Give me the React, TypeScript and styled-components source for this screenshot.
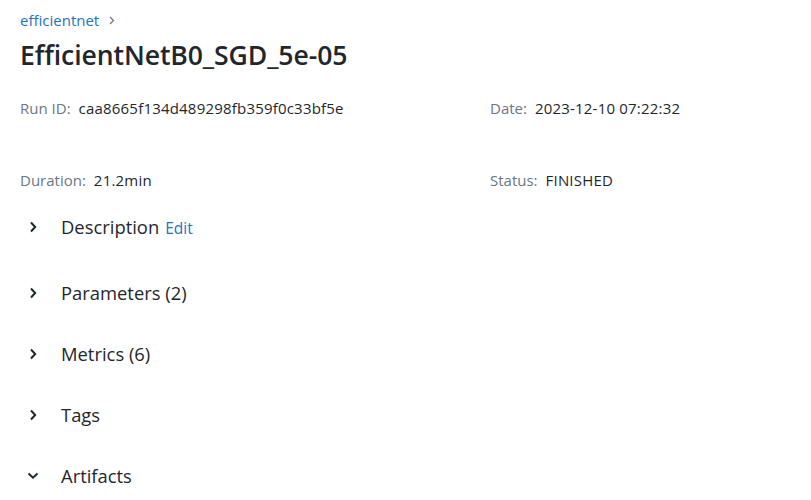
import React from "react";
import styled, { createGlobalStyle } from "styled-components";

const Global = createGlobalStyle`
  html, body { margin: 0; padding: 0; background: #fff; }
  body { font-family: "Segoe UI", "Open Sans", "Noto Sans", sans-serif; color: #1f2328; }
`;

const Page = styled.div`
  padding: 9px 20px 0 20px;
  width: 811px;
  box-sizing: border-box;
`;

const Breadcrumb = styled.div`
  display: flex;
  align-items: center;
  gap: 10px;
  height: 22px;
  font-size: 15px;
`;

const Crumb = styled.a`
  color: #2374bb;
  text-decoration: none;
`;

const CrumbSep = styled.span`
  color: #6b7785;
  display: flex;
  align-items: center;
`;

const Title = styled.h1`
  margin: 6px 0 0 0;
  font-size: 26.6px;
  line-height: 36px;
  font-weight: 600;
  color: #1f272d;
  letter-spacing: -0.1px;
`;

const Meta = styled.div`
  margin-top: 25px;
  display: grid;
  grid-template-columns: 470px 1fr;
  grid-auto-rows: 72px;
  font-size: 15px;
  line-height: 20px;
`;

const MetaItem = styled.div`
  display: flex;
  gap: 8px;
`;

const MetaLabel = styled.span`
  color: #6b7785;
`;

const MetaValue = styled.span`
  color: #1f272d;
  letter-spacing: 0.2px;
`;

const Sections = styled.div`
  margin-top: -46px;
  display: flex;
  flex-direction: column;
`;

const Section = styled.div<{ $extra: number }>`
  display: flex;
  align-items: center;
  height: 61px;
  margin-bottom: ${(p) => p.$extra}px;
  padding-left: 5px;
`;

const Toggle = styled.span`
  width: 16px;
  display: flex;
  justify-content: center;
  color: #1f272d;
  margin-right: 20px;
`;

const SectionTitle = styled.span`
  font-size: 18.4px;
  color: #1f272d;
`;

const EditLink = styled.a`
  margin-left: 6px;
  font-size: 15.5px;
  color: #2374bb;
  text-decoration: none;
  align-self: center;
  padding-top: 3px;
`;

const ChevronRight = ({ size = 12 }: { size?: number }) => (
  <svg width={size * 0.7} height={size} viewBox="0 0 7 12" fill="none">
    <path d="M1.3 1.5 L5.5 6 L1.3 10.5" stroke="currentColor" strokeWidth="2" strokeLinejoin="miter" />
  </svg>
);

const ChevronDown = () => (
  <svg width="12" height="8" viewBox="0 0 12 8" fill="none">
    <path d="M1.5 1.5 L6 5.7 L10.5 1.5" stroke="currentColor" strokeWidth="2" />
  </svg>
);

const SmallChevron = () => (
  <svg width="6" height="9" viewBox="0 0 6 9" fill="none">
    <path d="M1 1 L4.5 4.5 L1 8" stroke="currentColor" strokeWidth="1.3" />
  </svg>
);

const sections: { name: string; open?: boolean; edit?: boolean; extra: number }[] = [
  { name: "Description", edit: true, extra: 5 },
  { name: "Parameters (2)", extra: 0 },
  { name: "Metrics (6)", extra: 0 },
  { name: "Tags", extra: 0 },
  { name: "Artifacts", open: true, extra: 0 },
];

export default function App() {
  return (
    <Page>
      <Global />
      <Breadcrumb>
        <Crumb href="#">efficientnet</Crumb>
        <CrumbSep>
          <SmallChevron />
        </CrumbSep>
      </Breadcrumb>
      <Title>EfficientNetB0_SGD_5e-05</Title>
      <Meta>
        <MetaItem>
          <MetaLabel>Run ID:</MetaLabel>
          <MetaValue>caa8665f134d489298fb359f0c33bf5e</MetaValue>
        </MetaItem>
        <MetaItem>
          <MetaLabel>Date:</MetaLabel>
          <MetaValue>2023-12-10 07:22:32</MetaValue>
        </MetaItem>
        <MetaItem>
          <MetaLabel>Duration:</MetaLabel>
          <MetaValue>21.2min</MetaValue>
        </MetaItem>
        <MetaItem>
          <MetaLabel>Status:</MetaLabel>
          <MetaValue>FINISHED</MetaValue>
        </MetaItem>
      </Meta>
      <Sections>
        {sections.map((s) => (
          <Section key={s.name} $extra={s.extra}>
            <Toggle>{s.open ? <ChevronDown /> : <ChevronRight />}</Toggle>
            <SectionTitle>{s.name}</SectionTitle>
            {s.edit && <EditLink href="#">Edit</EditLink>}
          </Section>
        ))}
      </Sections>
    </Page>
  );
}
